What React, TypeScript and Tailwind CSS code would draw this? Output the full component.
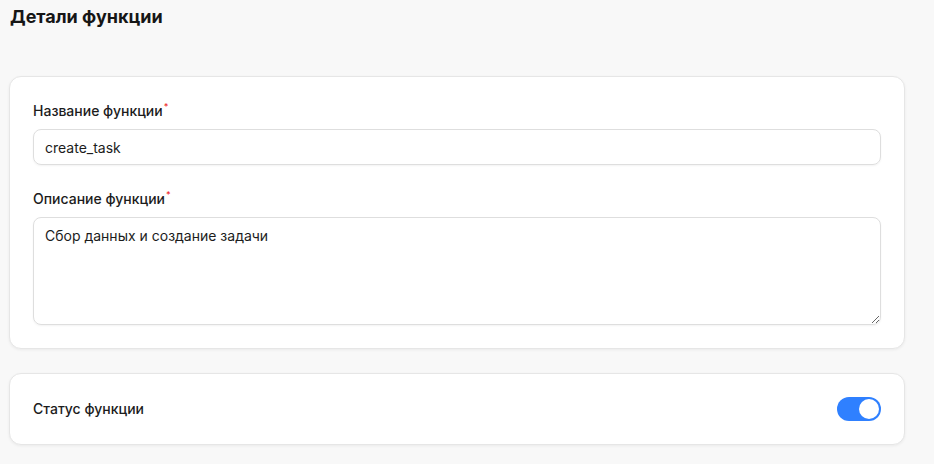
import { useState } from "react";

function Label({ children }: { children: string }) {
  return (
    <label className="block text-sm font-medium leading-5 text-[#1c1c1c] mb-2">
      {children}
      <sup className="text-[#ef2b2b] text-[9px] ml-px relative -top-1.5">*</sup>
    </label>
  );
}

export default function App() {
  const [enabled, setEnabled] = useState(true);

  return (
    <div
      className="min-h-screen w-[934px] h-[464px] overflow-hidden bg-[#f8f8f8] pl-[9px] pr-[29px] pt-[6px]"
      style={{ fontFamily: "Inter, 'Noto Sans', sans-serif" }}
    >
      <h1 className="text-lg font-bold leading-[22px] text-[#161616] pl-px mb-[48px]">
        Детали функции
      </h1>

      {/* Main fields */}
      <div className="bg-white rounded-xl border border-[#e6e6e6] shadow-[0_1px_3px_rgba(0,0,0,0.06)] px-[23px] pt-[24px] pb-[23px]">
        <Label>Название функции</Label>
        <input
          defaultValue="create_task"
          className="w-full h-9 rounded-lg border border-[#dedede] shadow-[0_1px_2px_rgba(0,0,0,0.05)] pl-[11px] pr-3 text-sm text-[#1c1c1c] outline-none"
        />

        <div className="mt-6">
          <Label>Описание функции</Label>
          <textarea
            defaultValue="Сбор данных и создание задачи"
            className="block w-full h-[108px] rounded-lg border border-[#dedede] shadow-[0_1px_2px_rgba(0,0,0,0.05)] pl-[11px] pr-3 py-2 text-sm leading-5 text-[#1c1c1c] outline-none"
          />
        </div>
      </div>

      {/* Status */}
      <div className="mt-6 bg-white rounded-xl border border-[#e6e6e6] shadow-[0_1px_3px_rgba(0,0,0,0.06)] px-[23px] py-[23px] flex items-center justify-between">
        <span className="text-sm font-medium text-[#1c1c1c]">Статус функции</span>
        <button
          onClick={() => setEnabled((v) => !v)}
          className={
            enabled
              ? "w-11 h-6 rounded-full bg-[#2f80ff] flex items-center justify-end p-0.5"
              : "w-11 h-6 rounded-full bg-[#d4d4d4] flex items-center justify-start p-0.5"
          }
        >
          <span className="w-5 h-5 rounded-full bg-white block" />
        </button>
      </div>
    </div>
  );
}
